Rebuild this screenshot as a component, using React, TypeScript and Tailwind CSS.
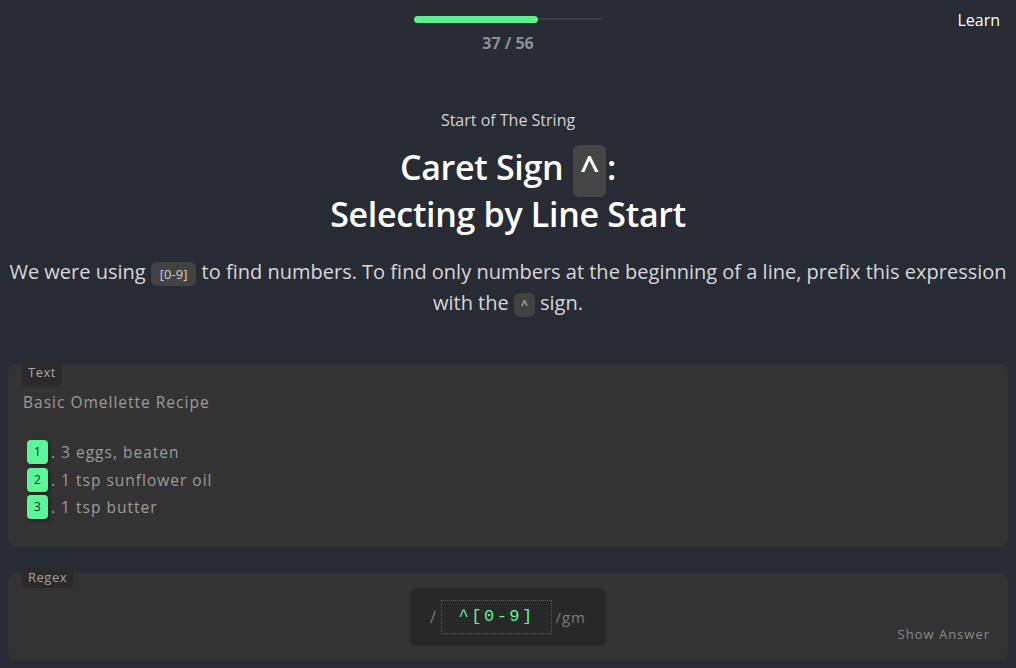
import React from 'react';

const lines = [
  { n: '1', text: '. 3 eggs, beaten' },
  { n: '2', text: '. 1 tsp sunflower oil' },
  { n: '3', text: '. 1 tsp butter' },
];

const App = () => {
  return (
    <div
      className="h-[668px] w-[1016px] overflow-hidden bg-[#272b33] text-white"
      style={{ fontFamily: '"Open Sans", "Noto Sans", sans-serif' }}
    >
      {/* Header */}
      <header className="relative flex flex-col items-center pt-[16px]">
        <div className="relative h-[6px] w-[188px]">
          <div className="absolute left-0 top-[2px] h-[2px] w-full bg-[#3d3f42]" />
          <div className="absolute left-0 top-0 h-[7px] w-[124px] rounded-full bg-[#5cf091]" />
        </div>
        <div className="mt-[10px] text-[16px] font-bold leading-[22px] text-[#8d8f93]">37 / 56</div>
        <div className="absolute right-[16px] top-[9px] text-[16px] leading-[22px] text-white">Learn</div>
      </header>

      {/* Lesson */}
      <section className="mt-[55px] flex flex-col items-center px-[8px] text-center">
        <div className="text-[16px] leading-[22px] text-[#d2d3d5]">Start of The String</div>
        <h1 className="mt-[13px] text-[34px] font-semibold leading-[47px] tracking-[-0.3px] text-white">
          Caret Sign{' '}
          <span className="-my-[10px] mx-[1px] inline-block h-[52px] rounded-[6px] bg-[#454545] px-[7px] align-middle leading-[46px]">^</span>:
          <br />
          Selecting by Line Start
        </h1>
        <p className="mt-[18px] text-[20px] leading-[31px] text-[#d6d7d9]">
          We were using{' '}
          <span className="-my-[4px] inline-block h-[24px] rounded-[6px] bg-[#424242] px-[9px] align-middle text-[13px] leading-[24px] text-[#d0d0d0]">
            [0-9]
          </span>{' '}
          to find numbers. To find only numbers at the beginning of a line, prefix this expression with the{' '}
          <span className="-my-[4px] inline-block h-[24px] rounded-[6px] bg-[#424242] px-[7px] align-middle text-[12px] leading-[24px] text-[#d0d0d0]">
            ^
          </span>{' '}
          sign.
        </p>
      </section>

      {/* Text panel */}
      <div className="relative mx-[8px] mt-[46px] h-[183px] rounded-[8px] bg-[#333333] px-[15px] pt-[27px]">
        <span className="absolute left-[14px] top-[-6px] rounded-[5px] bg-[#2a2a2a] px-[6px] py-[4px] text-[13px] leading-[21px] tracking-[0.5px] text-[#a8a8a8]">
          Text
        </span>
        <div className="text-[15.5px] leading-[22px] tracking-[1px] text-[#9c9c9c]">Basic Omellette Recipe</div>
        <div className="mt-[27px] flex flex-col gap-[3.5px] pl-[4px]">
          {lines.map((l) => (
            <div key={l.n} className="flex items-center text-[15.5px] leading-[24px] tracking-[1px] text-[#9c9c9c]">
              <span className="flex h-[24px] w-[21px] items-center justify-center rounded-[4px] bg-[#5cf59a] text-[12px] tracking-normal text-[#1b2a22] shadow-[2px_2px_3px_rgba(0,0,0,0.35)]">
                {l.n}
              </span>
              <span className="ml-[3px]">{l.text}</span>
            </div>
          ))}
        </div>
      </div>

      {/* Regex panel */}
      <div className="relative mx-[8px] mt-[26px] h-[88px] rounded-[8px] bg-[#333333]">
        <span className="absolute left-[14px] top-[-7px] rounded-[5px] bg-[#2a2a2a] px-[6px] py-[1px] text-[13px] leading-[20px] tracking-[0.5px] text-[#a0a0a0]">
          Regex
        </span>
        <div className="flex justify-center pt-[15px]">
          <div className="flex h-[58px] w-[196px] items-center rounded-[6px] bg-[#282828] px-[20px]">
            <span className="text-[16px] text-[#7a7a7a]">/</span>
            <div
              className="ml-[5px] flex h-[34px] w-[116px] items-center justify-center border border-dotted border-[#5a5a5a] text-[17px] font-light tracking-[2.5px] text-[#5cf59a]"
              style={{ fontFamily: '"Liberation Mono", "DejaVu Sans Mono", monospace' }}
            >
              ^[0-9]
            </div>
            <span className="ml-[3px] text-[15px] tracking-[1px] text-[#7a7a7a]">/gm</span>
          </div>
        </div>
        <div className="absolute right-[18px] bottom-[18px] text-[13px] leading-[18px] tracking-[1px] text-[#8a8a8a]">
          Show Answer
        </div>
      </div>
    </div>
  );
};

export default App;
